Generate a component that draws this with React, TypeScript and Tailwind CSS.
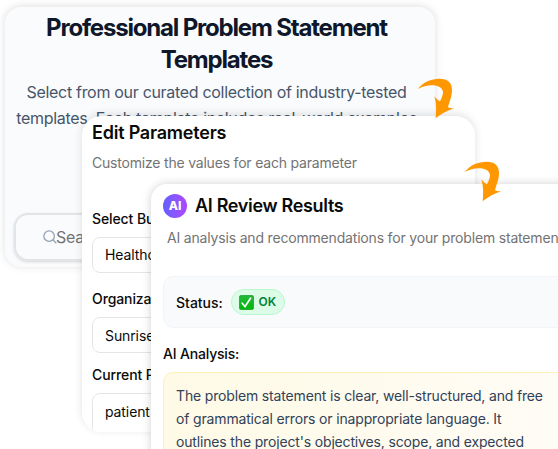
import React from 'react';

const CurvedArrow: React.FC<{ className: string }> = ({ className }) => (
  <svg viewBox="0 0 114 123" className={`absolute h-[41px] w-[38px] ${className}`} fill="#ff9800">
    <path d="M2 33C18 12 43 2 67 2C94 2 105 15 105 36C105 56 97 71 93 88C99 91 106 91 113 90C92 97 73 107 56 121C58 100 59 76 52 55C58 63 64 68 69 70C73 62 78 52 78 43C77 17 31 16 2 33Z" />
  </svg>
);

const fields = [
  { label: 'Select Business Type', value: 'Healthcare', gap: 'mt-[36px]', box: 'h-[36px] pt-[7px]' },
  { label: 'Organization Name', value: 'Sunrise Clinic', gap: 'mt-[16px]', box: 'h-[36px] pt-[8px]' },
  { label: 'Current Problem', value: 'patient wait times', gap: 'mt-[12px]', box: 'h-[64px] pt-[8px]' },
];

const TemplatesCard: React.FC = () => (
  <section className="absolute left-[5px] top-[7px] h-[260px] w-[430px] rounded-[16px] bg-[#fafbfd] pr-[7px] shadow-[0_-1px_8px_rgba(0,0,0,0.13)]">
    <h1 className="mt-[5px] text-center text-[24px] font-bold leading-8 tracking-[-1.18px] text-[#0f172a]">
      Professional Problem Statement
      <br />
      Templates
    </h1>
    <p className="mt-[3px] whitespace-nowrap text-center text-[16px] leading-[26px] tracking-[-0.31px] text-[#475569]">
      Select from our curated collection of industry-tested
      <br />
      templates. Each template includes real-world examples
    </p>
    <div className="ml-[9px] mt-[82px] flex h-[48px] w-[400px] items-center rounded-[14px] border-2 border-[#e2e4e8] pb-px pl-[27px] shadow-[0_1px_3px_rgba(0,0,0,0.15)]">
      <svg viewBox="0 0 16 16" className="size-[14px]" fill="none" stroke="#94a3b8" strokeWidth="1.5">
        <circle cx="7" cy="7" r="6" />
        <path d="M11.2 11.2L15.2 15.2" />
      </svg>
      <span className="-ml-px text-[16px] tracking-[-0.3px] text-[#737373]">Search templates</span>
    </div>
  </section>
);

const ParametersCard: React.FC = () => (
  <section className="absolute left-[82px] top-[116px] h-[316px] w-[393px] overflow-hidden rounded-[20px] bg-white pl-[10px]">
    <h2 className="mt-[3px] text-[18px] font-semibold leading-7 tracking-[-0.22px] text-[#0a0a0a]">Edit Parameters</h2>
    <p className="mt-[6px] text-[14px] leading-5 tracking-[-0.2px] text-[#737373]">Customize the values for each parameter</p>
    {fields.map((field) => (
      <div key={field.label} className={field.gap}>
        <div className="text-[14px] font-medium leading-5 tracking-[-0.1px] text-[#0a0a0a]">{field.label}</div>
        <div className={`mt-[8px] w-[370px] rounded-[8px] border border-[#e5e5e5] pl-[12px] text-[14px] leading-5 tracking-[-0.1px] text-[#0a0a0a] ${field.box}`}>
          {field.value}
        </div>
      </div>
    ))}
  </section>
);

const ReviewCard: React.FC = () => (
  <section className="absolute left-[151px] top-[184px] h-[300px] w-[450px] rounded-tl-[16px] bg-white pl-[12px] pt-[8px] shadow-[0_0_10px_rgba(0,0,0,0.18)]">
    <div className="flex h-7 items-center gap-2">
      <span className="flex size-6 items-center justify-center rounded-full bg-linear-to-r from-[#615fff] to-[#ad46ff] text-[12px] font-extrabold text-white">
        AI
      </span>
      <h2 className="text-[18px] font-semibold leading-7 tracking-[-0.32px] text-[#0a0a0a]">AI Review Results</h2>
    </div>
    <p className="ml-[4px] mt-[8px] whitespace-nowrap text-[14px] leading-5 tracking-[-0.18px] text-[#737373]">
      AI analysis and recommendations for your problem statement
    </p>
    <div className="mt-[28px] flex h-[52px] items-center rounded-[10px] border border-[#f1f5f9] bg-[#f9fafc] pl-[12px]">
      <span className="text-[14px] font-medium text-[#0a0a0a]">Status:</span>
      <span className="ml-[8px] flex h-[26px] w-[54px] items-center justify-center gap-[4px] rounded-full border border-[#b9f8cf] bg-[#dcfce7] text-[12px] font-semibold text-[#008236]">
        <svg viewBox="0 0 15 15" className="size-[15px]">
          <defs>
            <linearGradient id="check-fill" x1="0" y1="0" x2="0" y2="1">
              <stop offset="0" stopColor="#23b83b" />
              <stop offset="1" stopColor="#00b80b" />
            </linearGradient>
          </defs>
          <rect x="0.3" y="0.3" width="14.4" height="14.4" rx="2.2" fill="url(#check-fill)" stroke="#168d28" strokeWidth="0.6" />
          <path d="M3.2 8.2L6 11.6L11.5 3.2" fill="none" stroke="#fff" strokeWidth="1.7" strokeLinecap="round" />
        </svg>
        OK
      </span>
    </div>
    <div className="mt-[16px] text-[14px] font-medium leading-5 tracking-[-0.18px] text-[#0a0a0a]">AI Analysis:</div>
    <div className="mt-[8px] h-[120px] rounded-[10px] border border-[#fff0b3] bg-linear-to-r from-[#fefae6] to-[#fffcf7] pl-[12px] pt-[12px]">
      <p className="whitespace-nowrap text-[14px] leading-[22.75px] tracking-[-0.16px] text-[#314158]">
        The problem statement is clear, well-structured, and free
        <br />
        of grammatical errors or inappropriate language. It
        <br />
        outlines the project's objectives, scope, and expected
      </p>
    </div>
  </section>
);

const App: React.FC = () => {
  return (
    <main className="relative h-[449px] w-[558px] overflow-hidden bg-white font-['Inter',sans-serif]">
      <TemplatesCard />
      <div className="absolute left-[82px] top-[116px] h-[316px] w-[393px] rounded-[20px] shadow-[0_-2px_8px_rgba(0,0,0,0.12)]" />
      <ParametersCard />
      <ReviewCard />
      <CurvedArrow className="left-[417px] top-[78px]" />
      <CurvedArrow className="left-[464px] top-[161px]" />
    </main>
  );
};

export default App;
